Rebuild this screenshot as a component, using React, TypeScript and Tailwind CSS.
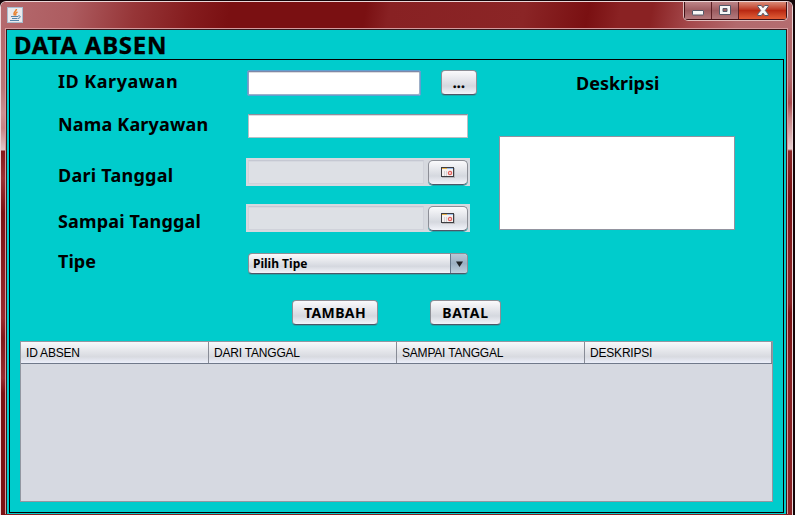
import type { ReactNode } from "react";

const steel =
  "border border-[#8c8e96] border-b-[#4e5668] bg-linear-to-b from-[#fafafc] via-[#d5d8df] via-65% to-[#f2f4fa] shadow-[0_1px_0_#1ba9ac]";

function Label({ children, className }: { children: ReactNode; className: string }) {
  return (
    <span className={`block w-[190px] shrink-0 text-[18px] leading-6 whitespace-nowrap ${className}`}>
      {children}
    </span>
  );
}

function JavaIcon() {
  return (
    <svg width="16" height="16" viewBox="0 0 16 16" fill="none" className="block">
      <rect x="0.5" y="0.5" width="15" height="15" fill="#e9eaee" stroke="#a9bccd" />
      <path d="M9.500 2C9.500 4.500 5.500 4.500 7.500 8.500M10.500 5C8 6 8.500 7 9 8.500" stroke="#e8822f" strokeWidth="1.5" />
      <path d="M4 9.500h7M5 11.500h5.500M3 13.500h9" stroke="#5484a8" strokeWidth="1.2" />
      <path d="M11 9c3-1 3 2 0 2.500" stroke="#5484a8" />
    </svg>
  );
}

function CalendarIcon() {
  return (
    <svg width="14" height="11" viewBox="0 0 14 11" shapeRendering="crispEdges" className="block">
      <rect x="1" y="1" width="13" height="10" fill="#b9b9bd" />
      <rect width="13" height="10" fill="#3d3d42" />
      <rect x="1" y="2" width="11" height="7" fill="#f5f1f1" />
      <rect x="1" y="1" width="5" height="1" fill="#e9b44c" />
      <rect x="6" y="1" width="6" height="1" fill="#9dbde8" />
      <path d="M3.500 4v5M5.500 4v5" stroke="#d5d3d6" />
      <circle cx="9" cy="6" r="1.600" fill="none" stroke="#e2605c" strokeWidth="1.300" shapeRendering="auto" />
    </svg>
  );
}

function DateField() {
  return (
    <div className="flex h-7 w-[224px] items-center justify-between bg-[#d6d9df] px-0.5">
      <div className="h-6 w-[176px] border border-[#d0d2da] border-t-[#c5c8d2] bg-[#dde0e5] shadow-[inset_0_1px_0_#d5d8df]" />
      <button className={`flex h-[25px] w-10 items-center justify-center rounded-[5px] ${steel}`}>
        <CalendarIcon />
      </button>
    </div>
  );
}

function WindowControls() {
  return (
    <div className="flex h-[19px] w-[105px] overflow-hidden rounded-b-[5px] border border-t-0 border-[#e0bcbc] bg-[#3e1015] px-px pb-px">
      <div className="flex w-[27px] items-start justify-center border-r border-[#5b2025] bg-linear-to-b from-[#bd8487] via-[#9c5b60] via-50% to-[#b47b7e]">
        <svg width="12" height="6" viewBox="0 0 12 6" className="mt-2">
          <rect x="0.5" y="0.5" width="11" height="4.500" rx="0.5" fill="#f7f7f7" stroke="#535868" />
        </svg>
      </div>
      <div className="flex w-[27px] items-start justify-center border-r border-[#5b2025] bg-linear-to-b from-[#bd8487] via-[#9c5b60] via-50% to-[#b47b7e]">
        <svg width="12" height="10" viewBox="0 0 12 10" className="mt-[3px]">
          <path fillRule="evenodd" d="M.5.5h11v9H.5zM4 3.500v3h4v-3z" fill="#f7f7f7" stroke="#535868" />
        </svg>
      </div>
      <div className="flex flex-1 items-start justify-center bg-linear-to-b from-[#d98976] via-[#b92812] via-50% to-[#e25d36]">
        <svg width="12" height="11" viewBox="0 0 12 11" className="mt-[3px]">
          <path
            d="M.8.500h3.500L6 2.700 7.700.500h3.500v1L8.300 5.500l2.900 3.500v1.500H7.700L6 8.200l-1.700 2.300H.8V9l2.900-3.500L.8 1.500z"
            fill="#f7f7f7"
            stroke="#535868"
          />
        </svg>
      </div>
    </div>
  );
}

const columns = ["ID ABSEN", "DARI TANGGAL", "SAMPAI TANGGAL", "DESKRIPSI"];

export default function App() {
  return (
    <div className="h-[515px] w-[795px] overflow-hidden bg-[#140508] pt-px pr-0.5 font-['Noto_Sans',sans-serif] font-bold text-black">
      <div className="flex h-[514px] w-[793px] flex-col overflow-hidden rounded-t-[6px] border border-b-0 border-[#ecd6d8] bg-[#861d1f]">
        <header className="flex h-[26px] shrink-0 items-start justify-between bg-[linear-gradient(100deg,#b56a6e_0%,#ad5c60_9%,#963537_17%,#851c1e_24%,#7a1012_29%,#7a1012_46%,#882123_49%,#8b2526_66%,#7a1012_74%,#8a2223_78%,#8a2223_82%,#a5494c_87%,#b26a6d_93%,#b46d70_100%)] pl-1.5 pr-[4px]">
          <div className="mt-[5px]">
            <JavaIcon />
          </div>
          <WindowControls />
        </header>
        <div className="flex flex-1">
          <div className="w-1 shrink-0 bg-[linear-gradient(#b4696c_0px,#b97678_60px,#c99192_85px,#c78384_100px,#e2c7c9_122px,#831719_123px,#9a3033_150px,#7a1012_185px,#8a1d20_240px,#98292d_290px,#7f1719_310px,#962b2f_350px,#7a1012_365px,#7a1012_100%)]" />
          <main className="h-[486px] w-[783px] shrink-0 border border-b-0 border-[#d39b9e]">
            <div className="flex h-[485px] flex-col border border-b-0 border-[#35171a] bg-[#00cccc] px-0.5">
              <h1 className="h-[29px] shrink-0 pl-[5px] text-[24px] leading-[30px] tracking-[0.750px] [-webkit-text-stroke:0.3px_black]">DATA ABSEN</h1>
              <section className="flex h-[454px] w-[775px] shrink-0 flex-col border border-black">
                <div className="flex h-[281px] shrink-0">
                  <div className="flex w-[489px] shrink-0 flex-col pl-12 pt-2.5">
                    <div className="flex h-[44px] items-start">
                      <Label className="-mt-px tracking-[0.500px]">ID Karyawan</Label>
                      <input className="-ml-px h-[26px] w-[174px] rounded-[2px] border border-[#5f9fd0] bg-white shadow-[inset_0_1px_0_#8088a6,inset_1px_0_0_#8fa0bf,inset_-1px_-1px_0_#9db0c8,inset_0_2px_0_#dcdce0] outline-none" />
                      <button className={`ml-5 h-[25px] w-9 rounded-[4px] text-[14px] leading-[21px] tracking-[0.300px] [-webkit-text-stroke:0.3px_black] ${steel}`}>...</button>
                    </div>
                    <div className="flex h-[44px] items-start">
                      <Label className="-mt-0.5 tracking-[0.170px]">Nama Karyawan</Label>
                      <input className="h-6 w-[220px] border border-[#b9bfc4] border-t-[#8f8e9b] bg-white shadow-[inset_0_1px_0_#dcdce0] outline-none" />
                    </div>
                    <div className="flex h-[46px] items-start">
                      <Label className="mt-[5px] tracking-[0.250px]">Dari Tanggal</Label>
                      <div className="-ml-0.5"><DateField /></div>
                    </div>
                    <div className="flex h-[49px] items-start">
                      <Label className="mt-[5px] tracking-[0.150px]">Sampai Tanggal</Label>
                      <div className="-ml-0.5"><DateField /></div>
                    </div>
                    <div className="flex h-[47px] items-start">
                      <Label className="-mt-[4px]">Tipe</Label>
                      <button className={`flex h-[21px] w-[220px] overflow-hidden rounded-[4px] text-left text-[12px] leading-[19px] ${steel}`}>
                        <span className="flex-1 pl-1">Pilih Tipe</span>
                        <span className="flex h-full w-[17px] items-center justify-center border-l border-[#65788c] bg-linear-to-b from-[#b9c8d6] via-[#9cb0c3] to-[#c0d1df]">
                          <svg width="7" height="6" viewBox="0 0 7 6"><path d="M0 .5h7L3.500 6z" fill="#1f2226" /></svg>
                        </span>
                      </button>
                    </div>
                    <div className="ml-[234px] flex gap-[52px] text-[14px] leading-[23px]">
                      <button className={`h-[25px] w-[86px] shrink-0 rounded-[4px] tracking-[0.400px] ${steel}`}>TAMBAH</button>
                      <button className={`h-[25px] w-[71px] shrink-0 rounded-[4px] tracking-[0.800px] ${steel}`}>BATAL</button>
                    </div>
                  </div>
                  <div className="flex flex-col pt-[11px]">
                    <Label className="pl-[77px]">Deskripsi</Label>
                    <textarea className="mt-[41px] block h-[94px] w-[236px] resize-none border border-[#92939f] bg-white outline-none" />
                  </div>
                </div>
                <div className="ml-2.5 h-[161px] w-[753px] border border-[#9297a1] bg-[#d6d9e1] font-['Liberation_Sans',sans-serif] text-[12px] font-normal">
                  <div className="flex h-[22px] border-b border-[#70798a] bg-linear-to-b from-[#f8f9fb] via-[#d8dae0] via-70% to-[#eceffa]">
                    {columns.map((name) => (
                      <div key={name} className="w-[188px] border-r border-[#888c96] pl-[5px] leading-[22px] tracking-[-0.200px] last:w-[187px]">
                        {name}
                      </div>
                    ))}
                  </div>
                </div>
              </section>
            </div>
          </main>
          <div className="w-1 shrink-0 bg-[linear-gradient(#b4696c_0px,#b0666a_50px,#a8474b_75px,#c78384_90px,#e8cfd1_121px,#8b2526_123px,#7a1012_170px,#8a2224_240px,#8a2224_275px,#7a1012_285px,#8a2224_350px,#8a2224_100%)]" />
        </div>
      </div>
    </div>
  );
}
